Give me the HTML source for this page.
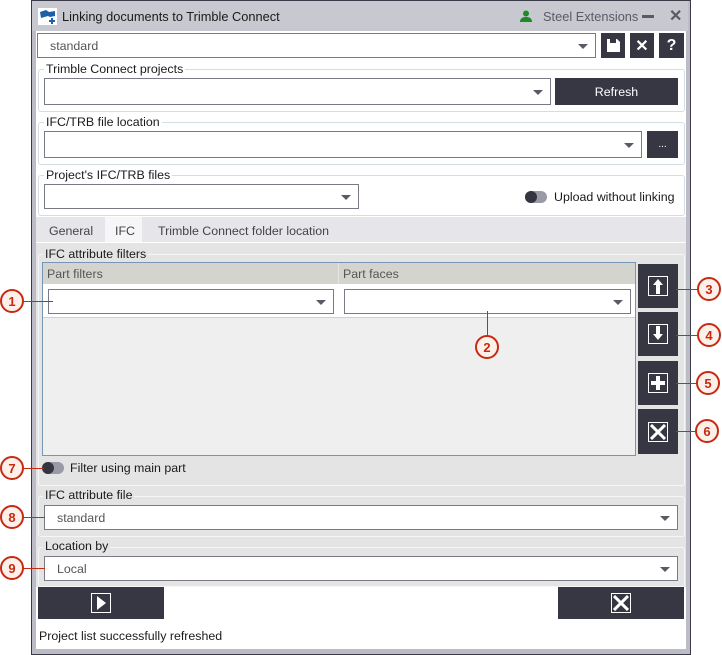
<!DOCTYPE html>
<html><head><meta charset="utf-8"><style>
*{box-sizing:border-box;margin:0;padding:0}
body{width:722px;height:655px;background:#fff;position:relative;font-family:"Liberation Sans",sans-serif;font-size:12.4px;color:#1a1a1a;overflow:hidden}
.a{position:absolute}
.cb{position:absolute;background:#fff;border:1px solid #7a7a86}
.cb:after{content:"";position:absolute;right:7px;top:50%;margin-top:-2px;border-left:5px solid transparent;border-right:5px solid transparent;border-top:5px solid #5a5a66}
.btn{position:absolute;background:#373744;color:#fff;display:flex;align-items:center;justify-content:center}
.grp{position:absolute;border:1px solid #d4dde2;border-radius:3px}
.lbl{position:absolute;padding:0 2px;line-height:13px}
.tg{position:absolute;width:22px;height:12px;border-radius:6px;background:#9a9aa6}
.tg:before{content:"";position:absolute;left:0;top:0;width:12px;height:12px;border-radius:6px;background:#353542}
.co{position:absolute;width:24px;height:24px;border-radius:50%;border:2px solid #c62a10;background:#fdf0ea;color:#c62a10;font-weight:bold;font-size:13px;display:flex;align-items:center;justify-content:center}
.ln{position:absolute;background:#c62a10}
.ico{border:1.5px solid #fff;display:flex;align-items:center;justify-content:center}
</style></head><body>
<div class="a" style="left:31px;top:0;width:660px;height:655px;background:#bcbcc6;border:1px solid #3a3a48"></div>
<div class="a" style="left:32px;top:1px;width:656px;height:30px;background:#c8c9d0"></div>
<div class="a" style="left:36px;top:31px;width:650px;height:618px;background:#fff"></div>
<svg class="a" style="left:38px;top:8px" width="19" height="17" viewBox="0 0 19 17"><rect width="19" height="17" fill="#fff"/><path d="M2 4l6-2 3 2 6-1v5l-5 1-2-1-7 2z" fill="#1d5fa8"/><path d="M13 10h2v2h2v2h-2v2h-2v-2h-2v-2h2z" fill="#1d5fa8"/></svg>
<div class="a" style="left:62px;top:9px;font-size:12.8px">Linking documents to Trimble Connect</div>
<svg class="a" style="left:520px;top:10px" width="12" height="12" viewBox="0 0 12 12"><circle cx="6" cy="3.5" r="3" fill="#1e8a2a"/><path d="M0 12c0-4 3-5 6-5s6 1 6 5z" fill="#1e8a2a"/></svg>
<div class="a" style="left:543px;top:9px;color:#5a5a66;font-size:12.8px">Steel Extensions</div>
<div class="a" style="left:642px;top:15px;width:12px;height:3px;background:#5a5a66"></div>
<div class="a" style="left:669px;top:6px;font-size:16px;font-weight:bold;color:#5a5a66">✕</div>
<div class="cb" style="left:37px;top:33px;width:559px;height:25px"><span class="a" style="left:12px;top:5px;color:#555">standard</span></div>
<div class="btn" style="left:601px;top:33px;width:24px;height:25px"><svg width="13" height="13" viewBox="0 0 13 13"><path d="M0 0h10l3 3v10H0z" fill="#fff"/><rect x="3" y="0" width="6" height="4" fill="#373744"/></svg></div>
<div class="btn" style="left:630px;top:33px;width:24px;height:25px;font-weight:bold;font-size:16px">✕</div>
<div class="btn" style="left:659px;top:33px;width:25px;height:25px;font-weight:bold;font-size:16px">?</div>
<div class="grp" style="left:38px;top:69px;width:647px;height:43px"></div>
<div class="lbl" style="left:44px;top:63px;background:#fff">Trimble Connect projects</div>
<div class="cb" style="left:44px;top:78px;width:507px;height:27px"></div>
<div class="btn" style="left:555px;top:78px;width:123px;height:27px">Refresh</div>
<div class="grp" style="left:38px;top:122px;width:647px;height:43px"></div>
<div class="lbl" style="left:44px;top:116px;background:#fff">IFC/TRB file location</div>
<div class="cb" style="left:44px;top:131px;width:598px;height:27px"></div>
<div class="btn" style="left:647px;top:131px;width:31px;height:27px;font-size:10px">...</div>
<div class="grp" style="left:38px;top:175px;width:647px;height:41px"></div>
<div class="lbl" style="left:44px;top:169px;background:#fff">Project's IFC/TRB files</div>
<div class="cb" style="left:44px;top:184px;width:315px;height:25px"></div>
<div class="tg" style="left:525px;top:191px"></div>
<div class="a" style="left:554px;top:190px">Upload without linking</div>
<div class="a" style="left:36px;top:217px;width:650px;height:25px;background:#e6e6ea"></div>
<div class="a" style="left:105px;top:217px;width:37px;height:25px;background:#f6f6f9"></div>
<div class="a" style="left:49px;top:224px;color:#444">General</div>
<div class="a" style="left:115px;top:224px;color:#444">IFC</div>
<div class="a" style="left:158px;top:224px;color:#444">Trimble Connect folder location</div>
<div class="a" style="left:36px;top:243px;width:650px;height:344px;background:#e4e4e4"></div>
<div class="grp" style="left:38px;top:254px;width:647px;height:232px;border-color:#f4f6f8"></div>
<div class="lbl" style="left:43px;top:248px;background:#e4e4e4">IFC attribute filters</div>
<div class="a" style="left:42px;top:262px;width:594px;height:194px;border:1px solid #7896b4;background:#efefef"></div>
<div class="a" style="left:43px;top:263px;width:592px;height:21px;background:#d4d4ce"></div>
<div class="a" style="left:338px;top:263px;width:1px;height:55px;background:#e6e6e6"></div>
<div class="a" style="left:47px;top:267px;color:#555">Part filters</div>
<div class="a" style="left:343px;top:267px;color:#555">Part faces</div>
<div class="a" style="left:43px;top:284px;width:592px;height:34px;background:#fff;border-bottom:1px solid #d0d0d0"></div>
<div class="cb" style="left:48px;top:289px;width:286px;height:25px"></div>
<div class="cb" style="left:344px;top:289px;width:287px;height:25px"></div>
<div class="btn" style="left:638px;top:264px;width:40px;height:44px"><div class="ico" style="width:20px;height:20px"><svg width="12" height="16" viewBox="0 0 12 16"><path d="M6 1L1 7h3v9h4V7h3z" fill="#fff"/></svg></div></div>
<div class="btn" style="left:638px;top:312px;width:40px;height:44px"><div class="ico" style="width:20px;height:20px"><svg width="12" height="16" viewBox="0 0 12 16"><path d="M6 14L1 8h3V0h4v8h3z" fill="#fff"/></svg></div></div>
<div class="btn" style="left:638px;top:361px;width:40px;height:44px"><div class="ico" style="width:20px;height:20px"><svg width="16" height="16" viewBox="0 0 16 16"><path d="M6 1h4v5h5v4h-5v5H6v-5H1V6h5z" fill="#fff"/></svg></div></div>
<div class="btn" style="left:638px;top:409px;width:40px;height:45px"><div class="ico" style="width:20px;height:20px"><svg width="16" height="16" viewBox="0 0 16 16"><path d="M1 1l14 14M15 1L1 15" stroke="#fff" stroke-width="3"/></svg></div></div>
<div class="tg" style="left:42px;top:462px"></div>
<div class="a" style="left:70px;top:461px">Filter using main part</div>
<div class="grp" style="left:38px;top:496px;width:647px;height:41px;border-color:#f4f6f8"></div>
<div class="lbl" style="left:43px;top:489px;background:#e4e4e4">IFC attribute file</div>
<div class="cb" style="left:44px;top:505px;width:634px;height:25px"><span class="a" style="left:12px;top:5px;color:#555">standard</span></div>
<div class="grp" style="left:38px;top:547px;width:647px;height:40px;border-color:#f4f6f8"></div>
<div class="lbl" style="left:43px;top:540px;background:#e4e4e4">Location by</div>
<div class="cb" style="left:44px;top:556px;width:634px;height:25px"><span class="a" style="left:12px;top:5px;color:#555">Local</span></div>
<div class="btn" style="left:38px;top:587px;width:126px;height:32px"><div class="ico" style="width:20px;height:20px"><svg width="10" height="14" viewBox="0 0 10 14"><path d="M1 0l9 7-9 7z" fill="#fff"/></svg></div></div>
<div class="btn" style="left:558px;top:587px;width:126px;height:32px"><div class="ico" style="width:20px;height:20px"><svg width="16" height="16" viewBox="0 0 16 16"><path d="M1 1l14 14M15 1L1 15" stroke="#fff" stroke-width="3"/></svg></div></div>
<div class="a" style="left:39px;top:629px">Project list successfully refreshed</div>
<div class="ln" style="left:22px;top:301px;width:31px;height:1px"></div><div class="co" style="left:0;top:289px">1</div>
<div class="ln" style="left:487px;top:311px;width:1px;height:26px"></div><div class="co" style="left:475px;top:335px">2</div>
<div class="ln" style="left:676px;top:289px;width:23px;height:1px"></div><div class="co" style="left:697px;top:277px">3</div>
<div class="ln" style="left:676px;top:335px;width:23px;height:1px"></div><div class="co" style="left:697px;top:323px">4</div>
<div class="ln" style="left:676px;top:383px;width:22px;height:1px"></div><div class="co" style="left:696px;top:371px">5</div>
<div class="ln" style="left:676px;top:431px;width:21px;height:1px"></div><div class="co" style="left:695px;top:419px">6</div>
<div class="ln" style="left:22px;top:468px;width:22px;height:1px"></div><div class="co" style="left:0;top:456px">7</div>
<div class="ln" style="left:22px;top:517px;width:23px;height:1px"></div><div class="co" style="left:0;top:505px">8</div>
<div class="ln" style="left:22px;top:568px;width:23px;height:1px"></div><div class="co" style="left:0;top:556px">9</div>
</body></html>
